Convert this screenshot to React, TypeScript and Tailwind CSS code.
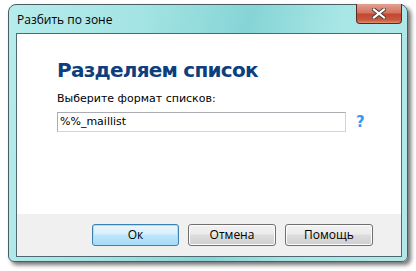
import React from "react";

export default function App() {
  return (
    <div className="w-[416px] h-[271px] bg-white pl-[8px] pt-[4px]" style={{ fontFamily: "'DejaVu Sans', Verdana, sans-serif" }}>
      <div className="relative w-[400px] h-[258px] rounded-t-[8px] rounded-b-[6px] border border-[#4a5d62] shadow-[3px_3px_4px_rgba(0,0,0,0.55)] bg-[linear-gradient(100deg,#b6ecec_0%,#a4e4e4_30%,#86d4d6_55%,#a8e6e6_75%,#b4e8e8_100%)] flex flex-col">
        <div className="h-[28px] flex items-center pl-[8px] pt-[1px]">
          <span className="text-[12px] text-black" style={{ fontFamily: "'Open Sans', 'Noto Sans', sans-serif" }}>Разбить по зоне</span>
        </div>
        <div className="absolute right-[5px] top-[-1px] w-[46px] h-[20px] rounded-b-[4px] border border-[#5a2a22] border-t-0 bg-[linear-gradient(180deg,#e2a090_0%,#d47462_45%,#c24830_55%,#c85a40_85%,#e09070_100%)] flex items-center justify-center">
          <svg width="14" height="11" viewBox="0 0 14 11">
            <path d="M2 1.5 L12 9.5 M12 1.5 L2 9.5" stroke="#4a3a3a" strokeWidth="4" strokeLinecap="square" />
            <path d="M2 1.5 L12 9.5 M12 1.5 L2 9.5" stroke="#ffffff" strokeWidth="2.2" strokeLinecap="square" />
          </svg>
        </div>
        <div className="ml-[7px] mr-[5px] h-[224px] border border-[#4f6a6e] flex flex-col bg-white">
          <div className="flex-1 pl-[40px] pt-[24px]">
            <div className="text-[20px] leading-[24px] font-bold text-[#0d3f7e] tracking-[-0.75px]">Разделяем список</div>
            <div className="mt-[10px] text-[11px] leading-[14px] text-black">Выберите формат списков:</div>
            <div className="mt-[5px] flex items-center">
              <div className="w-[289px] h-[20px] border border-[#abadb3] border-r-[#c7d6e8] border-b-[#c7d6e8] px-[2px] flex items-center text-[11px] text-black">%%_maillist</div>
              <span className="ml-[10px] text-[15px] font-bold text-[#3b96f2]">?</span>
            </div>
          </div>
          <div className="h-[42px] bg-[#f0f0f0] flex items-center pl-[75px] gap-[9px]">
            <button className="w-[87px] h-[22px] rounded-[3px] border border-[#3c7fb1] bg-[linear-gradient(180deg,#eaf6fd_0%,#d9f0fc_45%,#bee6fd_50%,#a7d9f5_100%)] shadow-[inset_0_0_0_1px_#a6e0f9] text-[12px] text-black" style={{ fontFamily: "'Open Sans', 'Noto Sans', sans-serif" }}>Ок</button>
            <button className="w-[88px] h-[22px] rounded-[3px] border border-[#707070] bg-[linear-gradient(180deg,#f2f2f2_0%,#ebebeb_45%,#dddddd_50%,#cfcfcf_100%)] shadow-[inset_0_0_0_1px_#fcfcfc] text-[12px] text-black" style={{ fontFamily: "'Open Sans', 'Noto Sans', sans-serif" }}>Отмена</button>
            <button className="w-[88px] h-[22px] rounded-[3px] border border-[#707070] bg-[linear-gradient(180deg,#f2f2f2_0%,#ebebeb_45%,#dddddd_50%,#cfcfcf_100%)] shadow-[inset_0_0_0_1px_#fcfcfc] text-[12px] text-black" style={{ fontFamily: "'Open Sans', 'Noto Sans', sans-serif" }}>Помощь</button>
          </div>
        </div>
      </div>
    </div>
  );
}
